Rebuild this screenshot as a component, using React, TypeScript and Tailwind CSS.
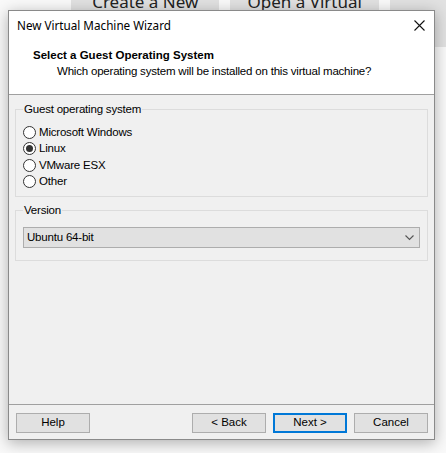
import React from "react";

const titleFont = { fontFamily: '"Noto Sans", "Liberation Sans", sans-serif' };
const bodyFont = { fontFamily: '"Liberation Sans", Arial, sans-serif' };

function Radio({ label, checked }: { label: string; checked?: boolean }) {
  return (
    <div className="flex items-center h-[16.5px]">
      <span className="w-[13px] h-[13px] rounded-full border border-[#333] bg-white flex items-center justify-center">
        {checked && <span className="w-[7px] h-[7px] rounded-full bg-[#333]" />}
      </span>
      <span className="ml-[3px] text-[11.5px] tracking-[-0.2px] text-black">{label}</span>
    </div>
  );
}

function WinButton({ label, primary }: { label: string; primary?: boolean }) {
  return (
    <button
      className={
        "w-[74px] h-[20px] bg-[#e1e1e1] text-[11.5px] text-black flex items-center justify-center " +
        (primary ? "border-2 border-[#0078d7]" : "border border-[#adadad]")
      }
    >
      {label}
    </button>
  );
}

export default function App() {
  return (
    <div className="relative w-[446px] h-[453px] bg-[#f9f9f9] overflow-hidden" style={titleFont}>
      {/* app behind the dialog */}
      <div className="flex gap-[11px] pl-[71px] -mt-[13px]">
        <div className="w-[159px] h-[60px] bg-[#e1e1e1] flex justify-center pt-[2px] text-[17px] text-[#222]">
          Create a New
        </div>
        <div className="w-[159px] h-[60px] bg-[#e1e1e1] flex justify-center pt-[2px] text-[17px] text-[#222]">
          Open a Virtual
        </div>
        <div className="w-[60px] h-[60px] bg-[#e1e1e1]" />
      </div>

      {/* wizard window */}
      <div className="absolute left-[8px] top-[10px] w-[427px] h-[430px] border border-[#8a8a8a] bg-[#f0f0f0] flex flex-col shadow-[0_3px_14px_rgba(0,0,0,0.3)]">
        <div className="h-[29px] bg-white flex items-center justify-between pl-[8px] pr-[9px] shrink-0">
          <span className="text-[11.7px] text-black">New Virtual Machine Wizard</span>
          <svg width="11" height="11" viewBox="0 0 11 11">
            <path d="M0.5 0.5 L10.5 10.5 M10.5 0.5 L0.5 10.5" stroke="#111" strokeWidth="1.1" />
          </svg>
        </div>
        <div className="h-[55px] bg-white border-b border-[#a0a0a0] pl-[24px] pt-[7px] shrink-0" style={bodyFont}>
          <div className="text-[11.5px] font-bold text-black leading-[16px]">Select a Guest Operating System</div>
          <div className="text-[11.5px] tracking-[-0.2px] text-black leading-[16px] pl-[24px]">
            Which operating system will be installed on this virtual machine?
          </div>
        </div>

        <div className="flex-1 px-[6px] pt-[6px] flex flex-col gap-[5px]" style={bodyFont}>
          <fieldset className="border border-[#dcdcdc] h-[96px] px-[7px]">
            <legend className="text-[11.5px] tracking-[-0.2px] leading-[16px] px-[1px] text-black">Guest operating system</legend>
            <div className="pt-[7px] flex flex-col">
              <Radio label="Microsoft Windows" />
              <Radio label="Linux" checked />
              <Radio label="VMware ESX" />
              <Radio label="Other" />
            </div>
          </fieldset>
          <fieldset className="border border-[#dcdcdc] h-[59px] px-[7px]">
            <legend className="text-[11.5px] tracking-[-0.2px] leading-[16px] px-[1px] text-black">Version</legend>
            <div className="mt-[9px] h-[21px] bg-[#e1e1e1] border border-[#adadad] flex items-center justify-between pl-[3px] pr-[5px]">
              <span className="text-[11.5px] tracking-[-0.2px] text-black">Ubuntu 64-bit</span>
              <svg width="9" height="6" viewBox="0 0 9 6">
                <path d="M0.5 0.5 L4.5 4.5 L8.5 0.5" fill="none" stroke="#555" strokeWidth="1.1" />
              </svg>
            </div>
          </fieldset>
        </div>

        <div className="border-t border-[#a0a0a0] h-[35px] shrink-0 flex items-start pt-[8px] pl-[7px] pr-[6px]" style={bodyFont}>
          <WinButton label="Help" />
          <div className="flex-1" />
          <div className="flex gap-[7px]">
            <WinButton label="< Back" />
            <WinButton label="Next >" primary />
            <WinButton label="Cancel" />
          </div>
        </div>
      </div>
    </div>
  );
}
